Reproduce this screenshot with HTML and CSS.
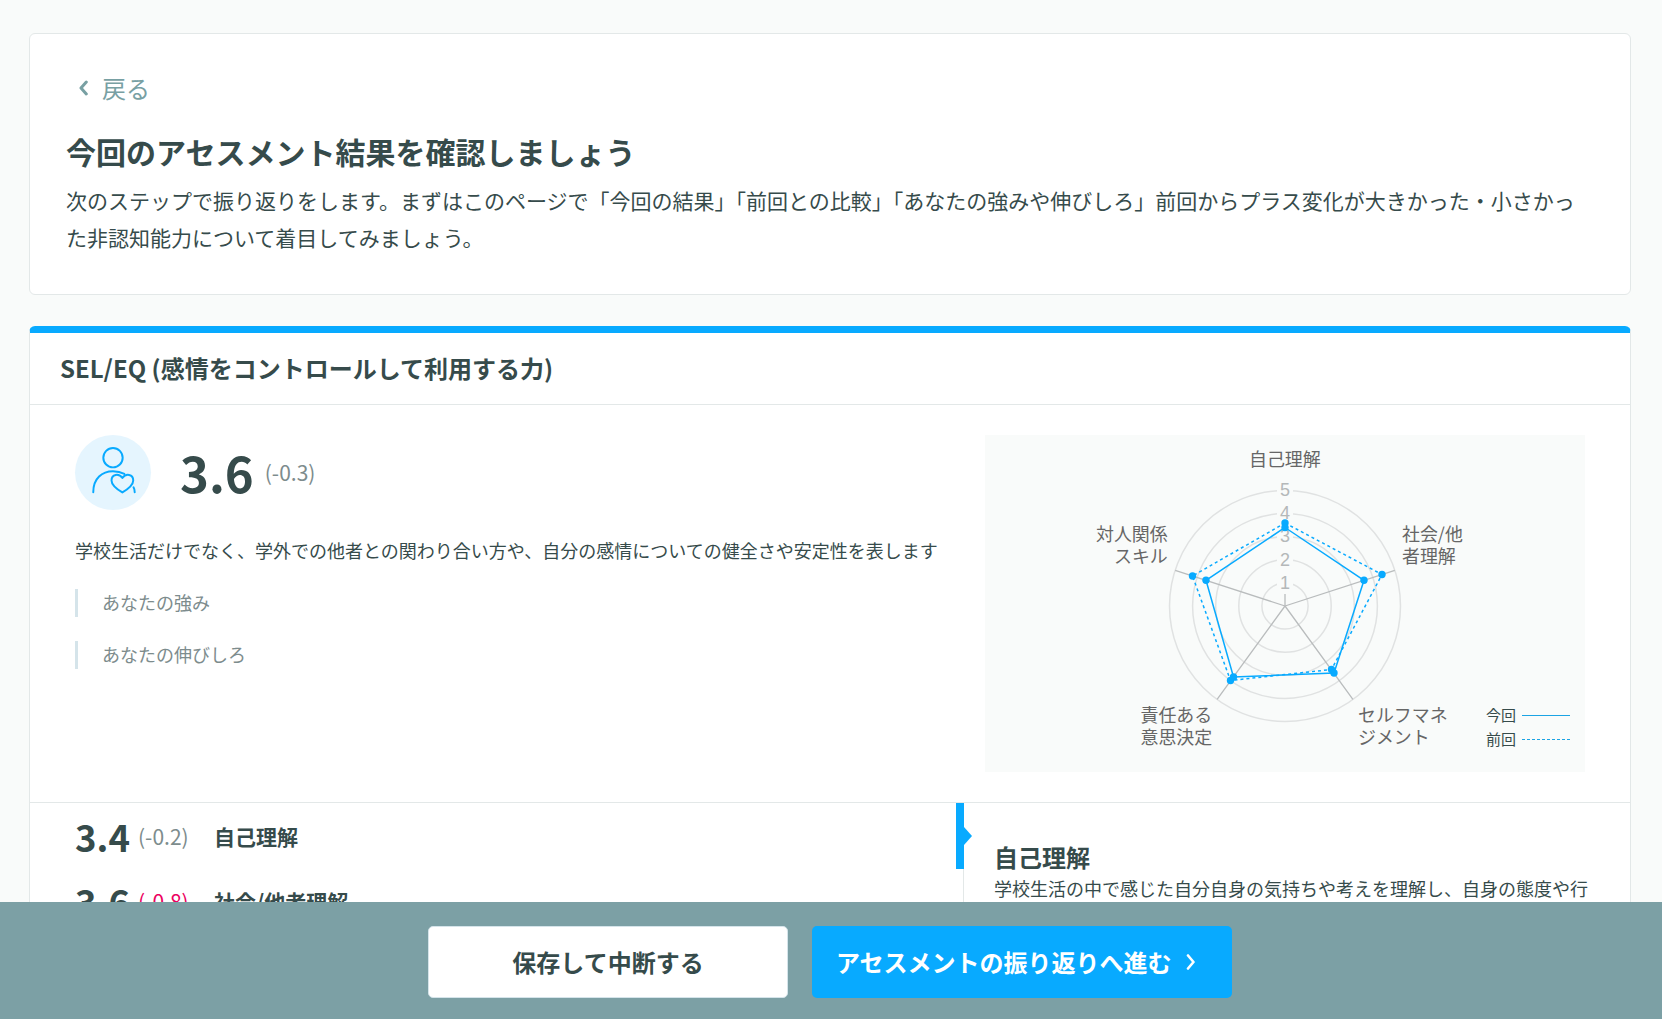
FILE: index.html
```html
<!DOCTYPE html>
<html lang="ja">
<head>
<meta charset="utf-8">
<title>アセスメント結果</title>
<link rel="stylesheet" href="styles.css">
</head>
<body>
<main class="page">
  <section class="card intro">
    <a class="back" href="#"><svg width="12" height="18" viewBox="0 0 12 18"><path d="M9.300 4 4 10 9.300 16"/></svg>戻る</a>
    <h1 class="intro-title">今回のアセスメント結果を確認しましょう</h1>
    <p class="intro-text">次のステップで振り返りをします。まずはこのページで「今回の結果」「前回との比較」「あなたの強みや伸びしろ」前回からプラス変化が大きかった・小さかった非認知能力について着目してみましょう。</p>
  </section>

  <section class="card result">
    <h2 class="result-title">SEL/EQ (感情をコントロールして利用する力)</h2>
    <div class="summary">
      <div class="summary-main">
        <div class="score-row">
          <span class="avatar"><svg width="76" height="75" viewBox="0 0 76 76"><circle cx="38" cy="23" r="9.800"/><path d="M18 58C18 44 27 36.700 38 36.700Q44.500 36.700 49.500 39.500M58.800 53Q60 55 60 58"/><path d="M47.500 58.200C41.500 54.500 36.500 50.500 36.500 46 36.500 39.500 44 38.500 47.500 43.500 51 38.500 58.500 39.500 58.500 46 58.500 50.500 53.500 54.500 47.500 58.200Z"/></svg></span>
          <strong class="score">3.6</strong>
          <span class="diff">(-0.3)</span>
        </div>
        <p class="description">学校生活だけでなく、学外での他者との関わり合い方や、自分の感情についての健全さや安定性を表します</p>
        <p class="note">あなたの強み</p>
        <p class="note">あなたの伸びしろ</p>
      </div>
      <div class="chart">
        <svg width="600" height="337" viewBox="985 435 600 337">
          <g class="rings"><circle cx="1285" cy="606" r="23.100"/><circle cx="1285" cy="606" r="46.200"/><circle cx="1285" cy="606" r="69.300"/><circle cx="1285" cy="606" r="92.400"/><circle cx="1285" cy="606" r="115.500"/></g>
          <path class="axes" d="M1285 606V490.500M1285 606 1394.800 570.300M1285 606 1352.900 699.400M1285 606 1217.100 699.400M1285 606 1175.200 570.300"/>
          <g class="ticks-bg"><rect x="1277" y="479" width="16" height="23"/><rect x="1277" y="502" width="16" height="23"/><rect x="1277" y="525" width="16" height="23"/><rect x="1277" y="548" width="16" height="23"/><rect x="1277" y="571" width="16" height="23"/></g>
          <g class="ticks"><text x="1285" y="496">5</text><text x="1285" y="519">4</text><text x="1285" y="542">3</text><text x="1285" y="566">2</text><text x="1285" y="589">1</text></g>
          <path class="line dashed" d="M1285 523 1382 574.500 1331.500 669.500 1230.500 680.500 1192.500 576Z"/>
          <path class="line" d="M1285 527.500 1364 580.300 1334 673 1233.500 677 1206 580.300Z"/>
          <g class="dots"><circle cx="1285" cy="523" r="3.700"/><circle cx="1382" cy="574.500" r="3.700"/><circle cx="1331.500" cy="669.500" r="3.700"/><circle cx="1230.500" cy="680.500" r="3.700"/><circle cx="1192.500" cy="576" r="3.700"/><circle cx="1285" cy="527.500" r="3.700"/><circle cx="1364" cy="580.300" r="3.700"/><circle cx="1334" cy="673" r="3.700"/><circle cx="1233.500" cy="677" r="3.700"/><circle cx="1206" cy="580.300" r="3.700"/></g>
          <g class="labels">
            <text x="1249" y="466">自己理解</text>
            <text x="1402" y="541">社会/他</text><text x="1402" y="563">者理解</text>
            <text x="1358" y="722">セルフマネ</text><text x="1358" y="744">ジメント</text>
            <text x="1140.500" y="722">責任ある</text><text x="1140.500" y="744">意思決定</text>
            <text x="1096" y="541">対人関係</text><text x="1114" y="563">スキル</text>
          </g>
          <g class="legend"><text x="1486" y="720.500">今回</text><text x="1486" y="744.500">前回</text><path d="M1522 715.500H1570"/><path class="dashed" d="M1522 739.500H1570"/></g>
        </svg>
      </div>
    </div>

    <div class="details">
      <ul class="skills">
        <li class="skill active"><strong class="skill-score">3.4</strong><span class="skill-diff">(-0.2)</span><b class="skill-name">自己理解</b></li>
        <li class="skill"><strong class="skill-score">3.6</strong><span class="skill-diff negative">(-0.8)</span><b class="skill-name">社会/他者理解</b></li>
      </ul>
      <article class="explain">
        <h3 class="explain-title">自己理解</h3>
        <p class="explain-text">学校生活の中で感じた自分自身の気持ちや考えを理解し、自身の態度や行</p>
      </article>
    </div>
  </section>
</main>

<footer class="actions">
  <button class="button save">保存して中断する</button>
  <button class="button next">アセスメントの振り返りへ進む<svg width="12" height="18" viewBox="0 0 12 18"><path d="M3 3.500 8.500 10 3 16.500"/></svg></button>
</footer>
</body>
</html>
```
FILE: styles.css
```css
* { box-sizing: border-box; }

body {
  margin: 0;
  height: 1019px;
  overflow: hidden;
  background: #f9fbfa;
  color: #364b4b;
  font-family: "Noto Sans CJK JP", sans-serif;
  font-size: 18px;
}

h1, h2, h3, p, ul { margin: 0; padding: 0; }

.page {
  display: flex;
  flex-direction: column;
  gap: 31px;
  padding: 33px 31px 0 29px;
}

.card {
  background: #fff;
  border: 1px solid #e3e8e8;
  border-radius: 6px;
}

.intro {
  height: 262px;
  padding: 35px 50px 0 36px;
}

.back {
  display: flex;
  align-items: center;
  gap: 13px;
  height: 36px;
  padding-left: 11px;
  color: #78a0a3;
  font-size: 24px;
  text-decoration: none;
}

.back svg, .next svg {
  fill: none;
  stroke: currentColor;
  stroke-width: 3;
  stroke-linecap: round;
  stroke-linejoin: round;
}

.next svg { stroke-width: 2.6; }

.intro-title {
  margin-top: 24px;
  font-size: 30px;
  line-height: 45px;
}

.intro-text {
  margin-top: 8px;
  font-size: 21px;
  line-height: 37.4px;
}

.result {
  border-top: 7px solid #08aaff;
}

.result-title {
  height: 72px;
  padding: 0 30px;
  border-bottom: 1px solid #e3e8e8;
  font-size: 24px;
  line-height: 69px;
}

.summary {
  display: flex;
  justify-content: space-between;
  height: 398px;
  padding: 30px 45px 0;
  border-bottom: 1px solid #e3e8e8;
}

.score-row {
  display: flex;
  align-items: center;
  height: 75px;
}

.avatar {
  width: 76px;
  height: 75px;
  border-radius: 50%;
  background: #e5f5fe;
}

.avatar svg {
  display: block;
  fill: none;
  stroke: #08aaff;
  stroke-width: 2;
  stroke-linecap: round;
  stroke-linejoin: round;
}

.score {
  margin: -2px 0 0 29px;
  font-size: 49px;
  line-height: 72px;
}

.diff {
  margin: -1px 0 0 11px;
  color: #7d8c8d;
  font-size: 21px;
}

.description {
  margin-top: 25px;
  line-height: 30px;
}

.note {
  height: 28px;
  margin-top: 24px;
  padding-left: 24px;
  border-left: 3px solid #d5e4ea;
  color: #7d8c8d;
  line-height: 26px;
}

.chart {
  height: 337px;
  background: #f9fbfa;
}

.chart svg { display: block; }
.rings { fill: none; stroke: #e0e2e2; stroke-width: 1.5; }
.axes { fill: none; stroke: #b9bcbd; stroke-width: 1.3; }
.ticks-bg { fill: #f9fbfa; }
.ticks { fill: #b4b8b9; font: 18px "Liberation Sans", sans-serif; text-anchor: middle; }
.line { fill: none; stroke: #08aaff; stroke-width: 1.5; }
.dashed { stroke-dasharray: 3 3; }
.dots { fill: #08aaff; }
.labels { fill: #666; font-size: 17.95px; }
.legend { fill: #364b4b; font-size: 15px; }
.legend path { stroke: #1ca4e4; stroke-width: 1; }
.legend .dashed { stroke-dasharray: 3 2; }

.details {
  display: grid;
  grid-template-columns: 934px 1fr;
  height: 200px;
}

.skills {
  border-right: 1px solid #e3e8e8;
  list-style: none;
}

.skill {
  position: relative;
  display: flex;
  align-items: center;
  height: 65px;
  padding-left: 45px;
}

.skill.active::before {
  content: "";
  position: absolute;
  top: 0;
  right: -1px;
  width: 8px;
  height: 66px;
  background: #08aaff;
}

.skill.active::after {
  content: "";
  position: absolute;
  top: 24px;
  right: -9px;
  border: solid transparent;
  border-width: 9px 0 9px 8px;
  border-left-color: #08aaff;
}

.skill-score { width: 54px; padding-top: 1px; font-size: 36.500px; }
.skill-diff { width: 85px; padding-left: 9px; color: #7d8c8d; font-size: 21px; }
.skill-diff.negative { color: #ec0060; }
.skill-name { font-size: 21px; }

.explain { padding: 35px 30px 0; }
.explain-title { font-size: 24px; line-height: 37px; }
.explain-text { line-height: 27px; white-space: nowrap; }

.actions {
  position: fixed;
  inset: auto 0 0;
  display: flex;
  justify-content: center;
  gap: 24px;
  height: 117px;
  padding: 24px 2px 0 0;
  background: #7ca0a5;
}

.button {
  display: flex;
  align-items: center;
  justify-content: center;
  width: 360px;
  height: 72px;
  padding: 0 0 2px;
  border: 1px solid #d5e4ea;
  border-radius: 5px;
  background: #fff;
  color: #364b4b;
  font: bold 24px "Noto Sans CJK JP", sans-serif;
}

.next {
  justify-content: flex-start;
  gap: 13px;
  width: 420px;
  padding-left: 24px;
  border: 0;
  background: #08aaff;
  color: #fff;
}
```
